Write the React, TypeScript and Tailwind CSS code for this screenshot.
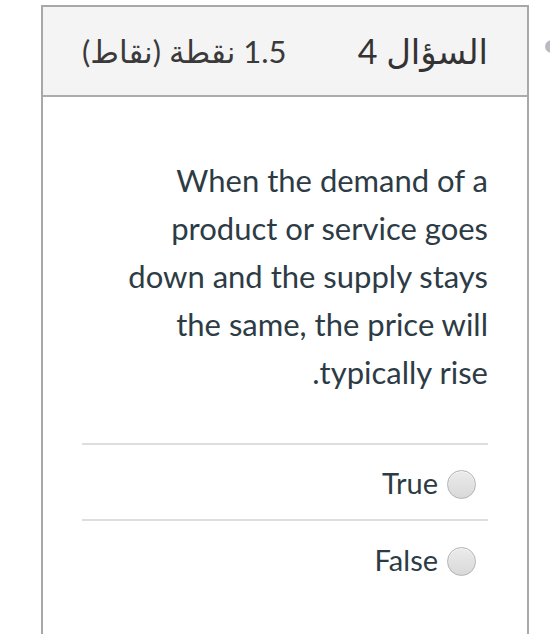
import { useState } from 'react';

const options = ['True', 'False'];

export default function App() {
  const [picked, setPicked] = useState<string | null>(null);

  return (
    <div className="relative min-h-[634px] w-[550px] overflow-hidden bg-white font-['Lato','DejaVu_Sans',sans-serif] text-[#2d3b45]">
      {/* partly hidden nav dot on the right edge */}
      <div className="absolute right-[-8px] top-[40px] h-[13px] w-[13px] rounded-full bg-[#b8bcc0]" />

      <div dir="rtl" className="ml-[41px] mt-[5px] h-[640px] w-[488px] border-2 border-b-0 border-[#a8a8a8]">
        {/* Question header */}
        <div className="flex h-[90px] items-center justify-between border-b-2 border-[#acacac] bg-[#f4f4f4] px-[39px]">
          <h3 className="text-[34px] font-normal leading-none text-[#333]">السؤال 4</h3>
          <span className="text-[31px] font-normal leading-none text-[#3a3a3a]">1.5 نقطة (نقاط)</span>
        </div>

        {/* Question body */}
        <div className="px-[39px] pt-[59px]">
          <p className="pl-[22px] text-right text-[31px] leading-[48px] text-[#2d3b45]">
            When the demand of a product or service goes down and the supply stays the same, the price will typically rise.
          </p>

          <div className="mt-[47px] border-t-2 border-[#dedede]">
            {options.map((opt) => (
              <label
                key={opt}
                onClick={() => setPicked(opt)}
                className="flex h-[76px] cursor-pointer items-center gap-[9px] border-b-2 border-[#dedede] pr-[12px] last:border-b-0"
              >
                <span className="mt-[4px] flex h-[29px] w-[29px] shrink-0 items-center justify-center rounded-full border border-[#b3b3b3] bg-gradient-to-b from-[#ebebeb] to-[#d9d9d9] shadow-[inset_0_1px_0_#f8f8f8]">
                  {picked === opt && <span className="h-[11px] w-[11px] rounded-full bg-[#2d3b45]" />}
                </span>
                <span className="text-[29px] leading-none">{opt}</span>
              </label>
            ))}
          </div>
        </div>
      </div>
    </div>
  );
}
